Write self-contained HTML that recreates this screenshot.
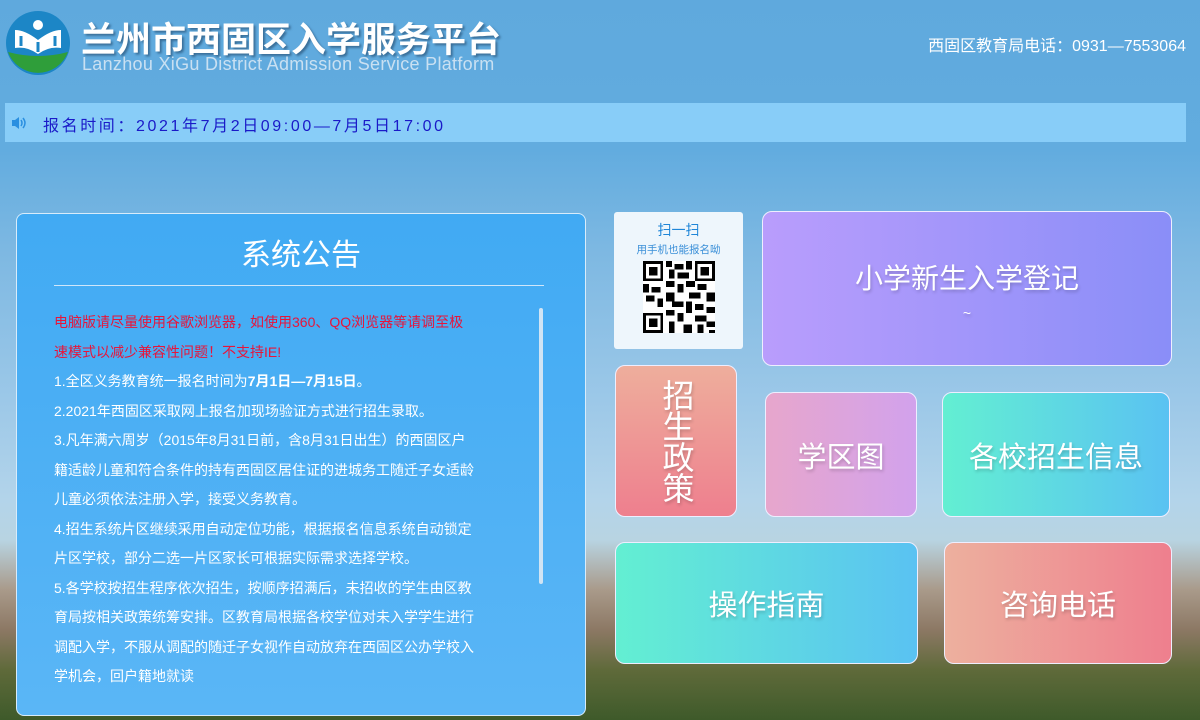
<!DOCTYPE html>
<html><head><meta charset="utf-8"><style>
*{margin:0;padding:0;box-sizing:border-box}
body{width:1200px;height:720px;overflow:hidden;position:relative;font-family:"Liberation Sans","Noto Sans CJK SC",sans-serif;
background:linear-gradient(180deg,#5fa9dd 0px,#62acdf 150px,#7db8e2 250px,#9cc8e8 400px,#b3d4ea 500px,#b8d4e2 540px,#a99a8a 590px,#8c7864 630px,#5f6a3a 670px,#3e5a2a 720px)}
.abs{position:absolute}
.t1{left:81px;top:12px;font-size:35px;font-weight:bold;color:#fff;letter-spacing:0px;text-shadow:2px 2px 2px #3a6f99}
.t2{left:82px;top:54px;font-size:18px;color:#c9e0f2;letter-spacing:0.3px}
.tel{right:14px;top:32px;font-size:16px;color:#fff}
.bar{left:5px;top:103px;width:1181px;height:39px;background:#88cdf8}
.bar span{position:absolute;left:38px;top:9px;font-size:16px;color:#1a1ac8;letter-spacing:2.6px}
.panel{left:16px;top:213px;width:570px;height:503px;border:1px solid #d8ecfb;border-radius:8px;background:linear-gradient(180deg,#41aaf3,#5ab6f6)}
.panel h2{position:absolute;left:0;width:100%;top:16px;text-align:center;font-size:30px;font-weight:normal;color:#fff}
.panel .hr{position:absolute;left:37px;top:71px;width:490px;height:1px;background:#cfe6fa}
.panel .txt{position:absolute;left:37px;top:94px;width:420px;font-size:14px;line-height:29.5px;color:#fff}
.red{color:#e8143a}
.sb{position:absolute;left:522px;top:94px;width:4px;height:276px;background:#d0e4f4;border-radius:2px}
.card{position:absolute;border:1px solid #eef;border-radius:10px;color:#fff;display:flex;align-items:center;justify-content:center;text-shadow:1px 2px 3px rgba(0,0,0,.2)}
</style></head><body>
<svg class="abs" style="left:5px;top:10px" width="66" height="66" viewBox="0 0 66 66">
<circle cx="33" cy="33" r="32" fill="#1c86c6"/>
<path d="M3 42 Q33 50 63 42 A32 32 0 0 1 3 42Z" fill="#2f9e3a"/>
<path d="M10 38 L10 20 Q20 20 33 30 Q46 20 56 20 L56 38 Q44 36 33 44 Q22 36 10 38Z" fill="#fff"/>
<circle cx="33" cy="15" r="5" fill="#fff"/>
<path d="M16 26 v10 M50 26 v10 M33 32 v10" stroke="#1c86c6" stroke-width="3"/>
</svg>
<div class="abs t1">兰州市西固区入学服务平台</div>
<div class="abs t2">Lanzhou XiGu District Admission Service Platform</div>
<div class="abs tel">西固区教育局电话：0931—7553064</div>
<div class="abs bar"><svg class="abs" style="left:6px;top:13px" width="16" height="14" viewBox="0 0 16 14"><path d="M1 4h3l4-3v12l-4-3H1z" fill="#2a8fe0"/><path d="M10 4q2 3 0 6M12 2q4 5 0 10" stroke="#2a8fe0" fill="none" stroke-width="1.5"/></svg><span>报名时间：2021年7月2日09:00—7月5日17:00</span></div>
<div class="abs panel"><h2>系统公告</h2><div class="hr"></div>
<div class="txt"><span class="red">电脑版请尽量使用谷歌浏览器，如使用360、QQ浏览器等请调至极速模式以减少兼容性问题！不支持IE!</span><br>1.全区义务教育统一报名时间为<b>7月1日—7月15日</b>。<br>2.2021年西固区采取网上报名加现场验证方式进行招生录取。<br>3.凡年满六周岁（2015年8月31日前，含8月31日出生）的西固区户籍适龄儿童和符合条件的持有西固区居住证的进城务工随迁子女适龄儿童必须依法注册入学，接受义务教育。<br>4.招生系统片区继续采用自动定位功能，根据报名信息系统自动锁定片区学校，部分二选一片区家长可根据实际需求选择学校。<br>5.各学校按招生程序依次招生，按顺序招满后，未招收的学生由区教育局按相关政策统筹安排。区教育局根据各校学位对未入学学生进行调配入学，不服从调配的随迁子女视作自动放弃在西固区公办学校入学机会，回户籍地就读</div>
<div class="sb"></div></div>
<div class="abs" style="left:614px;top:212px;width:129px;height:137px;background:#eef6fc;border-radius:3px;text-align:center">
<div style="color:#1f86d8;font-size:14px;margin-top:8px">扫一扫</div>
<div style="color:#3a8fd8;font-size:10.5px;margin-top:2px">用手机也能报名呦</div>
<svg width="74" height="72" viewBox="0 0 25 25" style="margin-top:4px" shape-rendering="crispEdges">
<rect width="25" height="25" fill="#fff"/>
<path d="M0 0h7v7H0zM18 0h7v7h-7zM0 18h7v7H0z" fill="#000"/><path d="M1 1h5v5H1zM19 1h5v5h-5zM1 19h5v5H1z" fill="#fff"/><path d="M2 2h3v3H2zM20 2h3v3h-3zM2 20h3v3H2z" fill="#000"/>
<path d="M8 0h2v2H8zM11 1h3v2h-3zM15 0h2v3h-2zM9 3h2v3H9zM12 4h4v2h-4zM8 7h3v2H8zM12 8h2v3h-2zM15 7h3v2h-3zM19 8h3v2h-3zM0 8h2v3H0zM3 9h3v2H3zM22 11h3v3h-3zM8 11h3v3H8zM16 11h4v2h-4zM1 12h3v2H1zM5 13h2v3H5zM10 14h4v2h-4zM15 14h2v4h-2zM18 15h3v2h-3zM22 16h3v2h-3zM8 17h3v2H8zM12 18h2v3h-2zM18 19h4v2h-4zM9 21h2v4H9zM14 22h3v3h-3zM19 22h2v3h-2zM22 21h3v2h-3zM23 24h2v1h-2z" fill="#000"/></svg>
</div>
<div class="card" style="left:762px;top:211px;width:410px;height:155px;background:linear-gradient(90deg,#b99dfc,#8a8ef8);flex-direction:column;font-size:28px">小学新生入学登记<div style="font-size:14px;margin-top:8px">~</div></div>
<div class="card" style="left:615px;top:365px;width:122px;height:152px;background:linear-gradient(180deg,#eeae9c,#ee7f8e);font-size:32px;line-height:33px;writing-mode:vertical-rl;letter-spacing:-1px">招生政策</div>
<div class="card" style="left:765px;top:392px;width:152px;height:125px;background:linear-gradient(90deg,#e7a6cc,#d2a2ec);font-size:29px">学区图</div>
<div class="card" style="left:942px;top:392px;width:228px;height:125px;background:linear-gradient(90deg,#63efd2,#5ac2f2);font-size:29px">各校招生信息</div>
<div class="card" style="left:615px;top:542px;width:303px;height:122px;background:linear-gradient(90deg,#63efd2,#5ac2f2);font-size:29px">操作指南</div>
<div class="card" style="left:944px;top:542px;width:228px;height:122px;background:linear-gradient(90deg,#edb09e,#ee7f8e);font-size:29px">咨询电话</div>
</body></html>
